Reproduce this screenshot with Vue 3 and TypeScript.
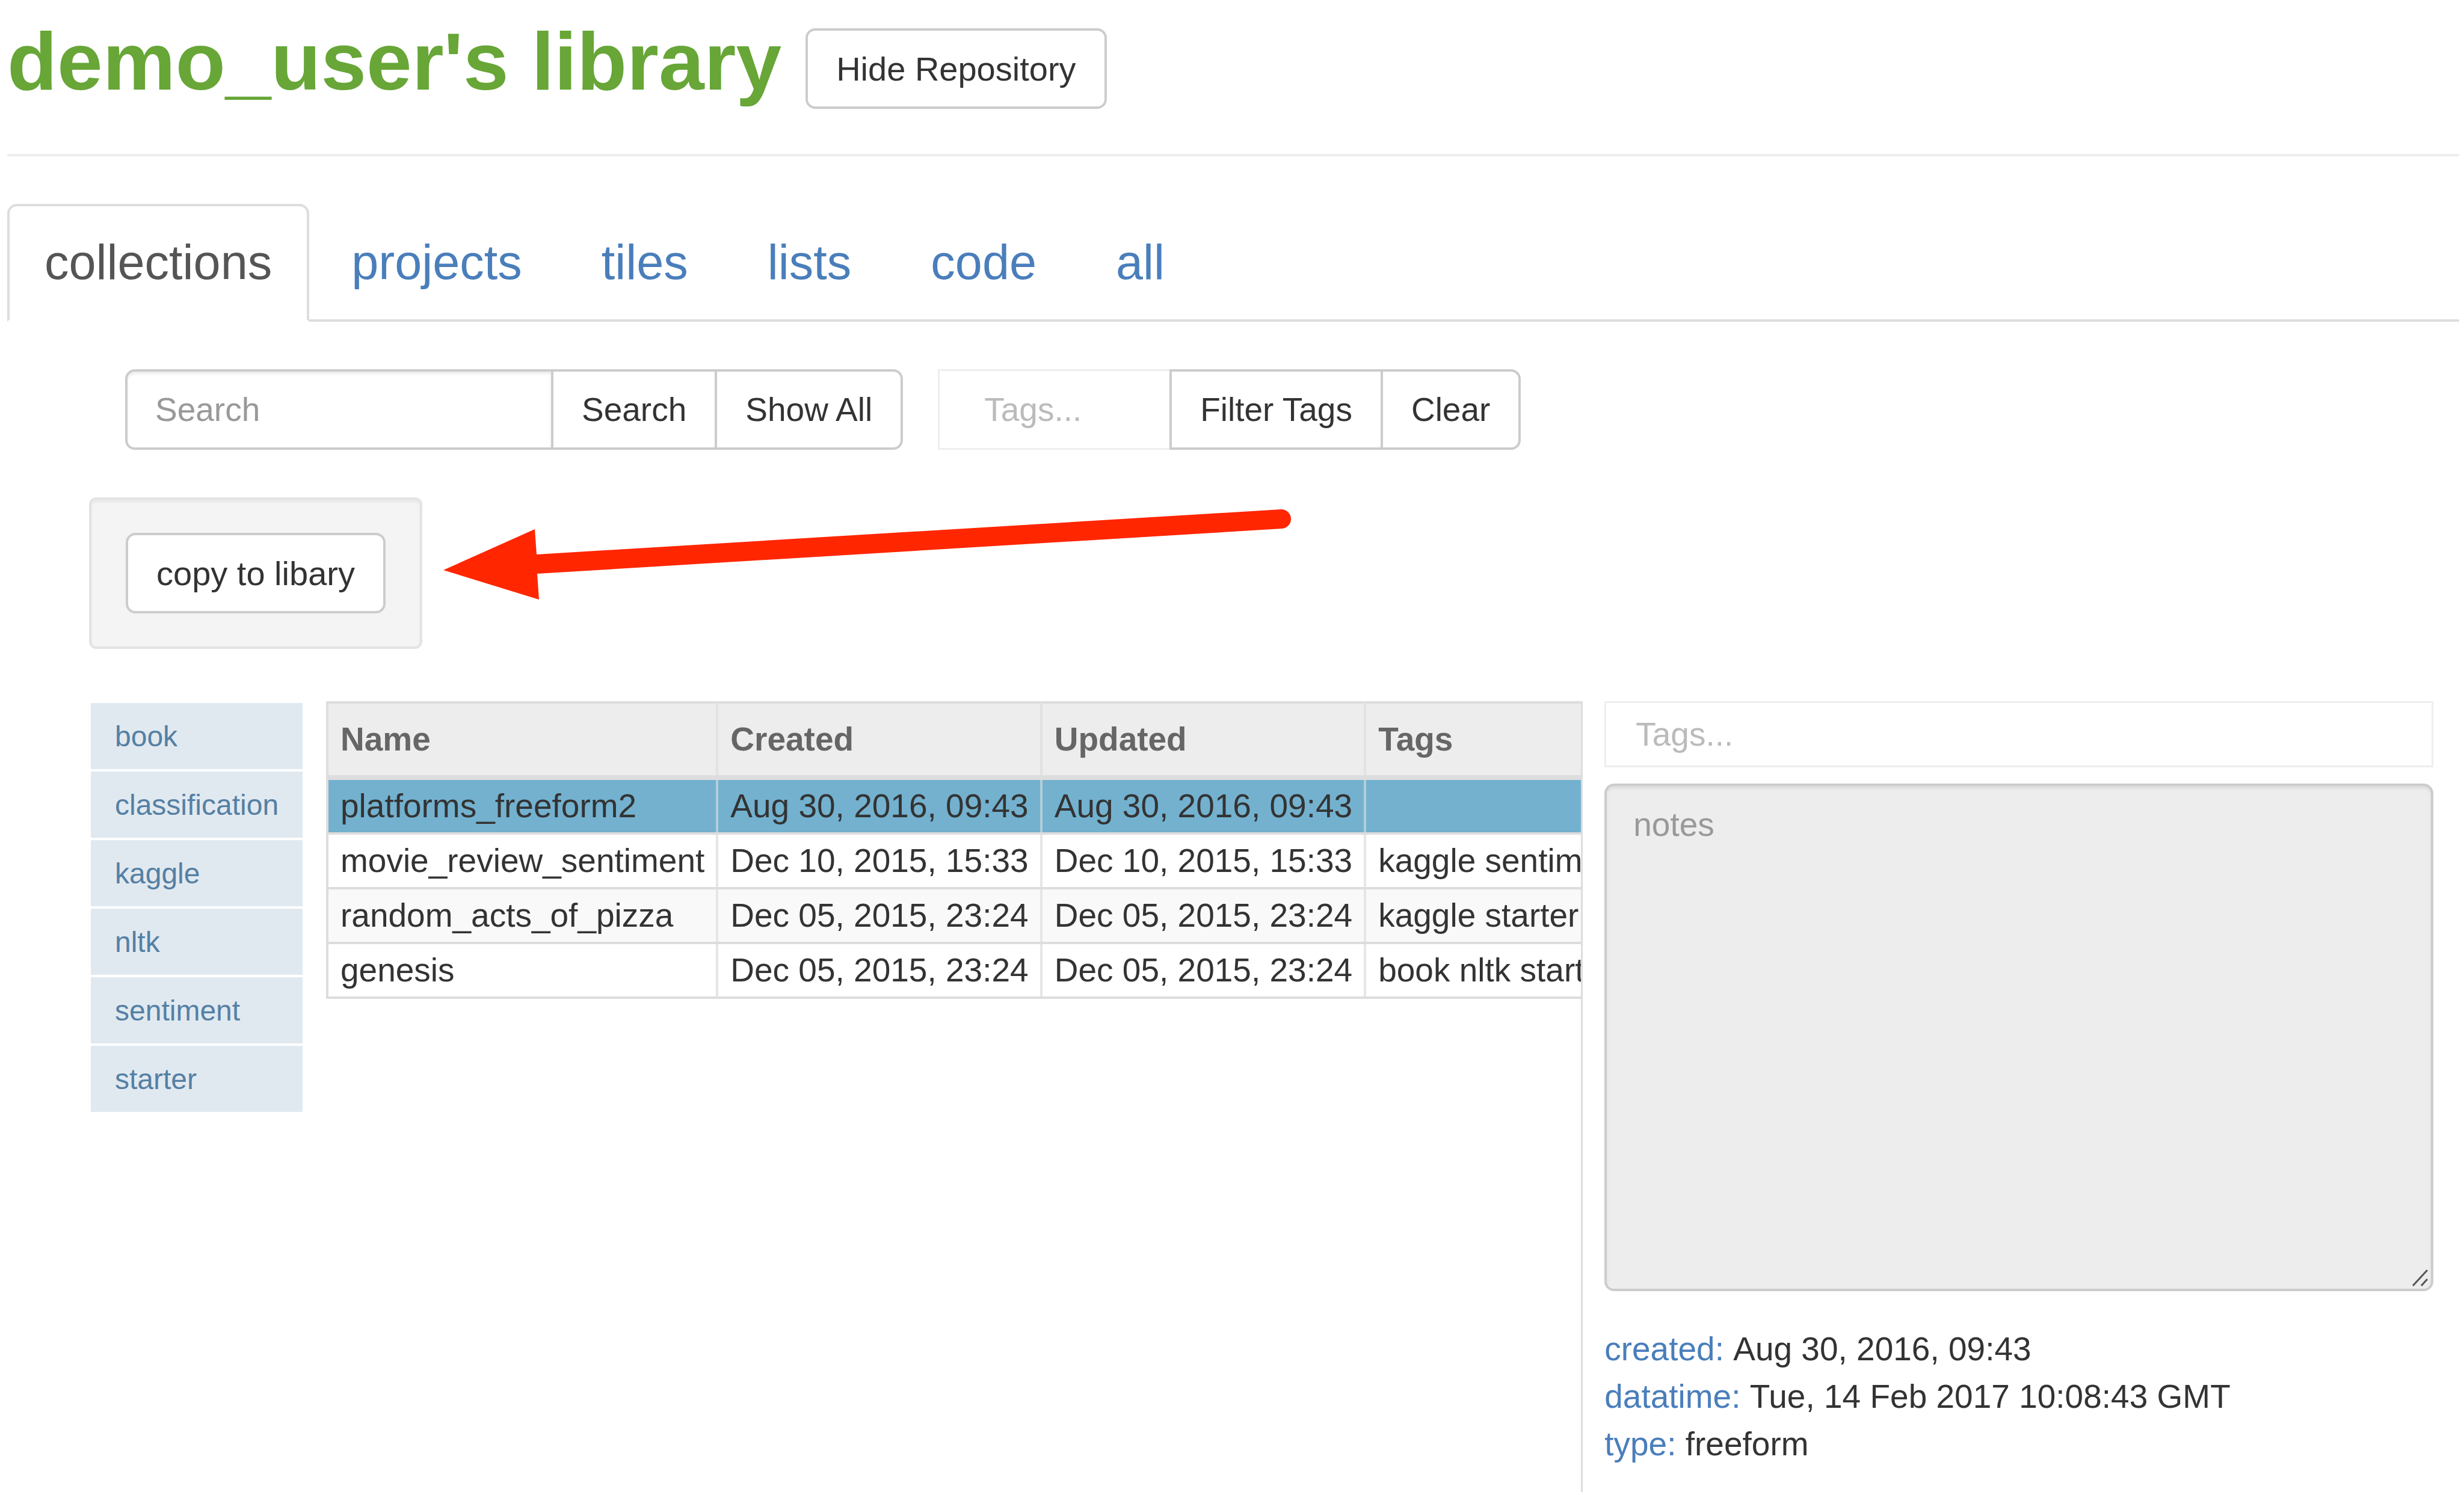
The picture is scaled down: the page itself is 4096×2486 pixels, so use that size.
<script setup lang="ts">
import { ref } from 'vue'

interface Collection {
  name: string
  created: string
  updated: string
  tags: string
}

const tabs: string[] = ['collections', 'projects', 'tiles', 'lists', 'code', 'all']
const activeTab = ref('collections')

const tagNames: string[] = ['book', 'classification', 'kaggle', 'nltk', 'sentiment', 'starter']

const collections: Collection[] = [
  { name: 'platforms_freeform2', created: 'Aug 30, 2016, 09:43', updated: 'Aug 30, 2016, 09:43', tags: '' },
  { name: 'movie_review_sentiment', created: 'Dec 10, 2015, 15:33', updated: 'Dec 10, 2015, 15:33', tags: 'kaggle sentiment' },
  { name: 'random_acts_of_pizza', created: 'Dec 05, 2015, 23:24', updated: 'Dec 05, 2015, 23:24', tags: 'kaggle starter' },
  { name: 'genesis', created: 'Dec 05, 2015, 23:24', updated: 'Dec 05, 2015, 23:24', tags: 'book nltk starter' },
]
const selected = ref('platforms_freeform2')

const details: { label: string; value: string }[] = [
  { label: 'created:', value: 'Aug 30, 2016, 09:43' },
  { label: 'datatime:', value: 'Tue, 14 Feb 2017 10:08:43 GMT' },
  { label: 'type:', value: 'freeform' },
]
</script>

<template>
  <div class="page">
    <header class="page-header">
      <h1>demo_user's library</h1>
      <button type="button" class="btn btn-single">Hide Repository</button>
    </header>

    <nav class="tabs">
      <a
        v-for="tab in tabs"
        :key="tab"
        href="#"
        class="tab"
        :class="{ active: tab === activeTab }"
        @click.prevent="activeTab = tab"
      >{{ tab }}</a>
    </nav>

    <main class="content">
      <form class="toolbar" @submit.prevent>
        <div class="group">
          <input class="field search-field" type="text" placeholder="Search" aria-label="Search" />
          <button type="submit" class="btn">Search</button>
          <button type="button" class="btn last">Show All</button>
        </div>
        <div class="group">
          <input class="tag-field filter-field" type="text" placeholder="Tags..." aria-label="Filter by tags" />
          <button type="button" class="btn">Filter Tags</button>
          <button type="button" class="btn last">Clear</button>
        </div>
      </form>

      <div class="actions">
        <div class="well">
          <button type="button" class="btn btn-single">copy to libary</button>
        </div>
        <svg class="arrow" width="1412" height="152" viewBox="0 0 1412 152" aria-hidden="true">
          <path
            d="M1 102 L153 34 L156 76 L1393 1 A16 16 0 0 1 1395 33 L157 108 L160 151 Z"
            fill="#ff2600"
          />
        </svg>
      </div>

      <div class="panels">
        <ul class="tag-list">
          <li v-for="tag in tagNames" :key="tag">
            <button type="button" class="tag-item">{{ tag }}</button>
          </li>
        </ul>

        <section class="table-panel">
          <table>
            <thead>
              <tr>
                <th>Name</th>
                <th>Created</th>
                <th>Updated</th>
                <th>Tags</th>
              </tr>
            </thead>
            <tbody>
              <tr
                v-for="item in collections"
                :key="item.name"
                :class="{ selected: item.name === selected }"
                @click="selected = item.name"
              >
                <td>{{ item.name }}</td>
                <td>{{ item.created }}</td>
                <td>{{ item.updated }}</td>
                <td>{{ item.tags }}</td>
              </tr>
            </tbody>
          </table>
        </section>

        <aside class="detail">
          <input class="tag-field detail-tags" type="text" placeholder="Tags..." aria-label="Tags" />
          <div class="notes-wrap">
            <textarea class="notes" placeholder="notes" aria-label="notes"></textarea>
            <svg class="grip" width="28" height="30" viewBox="0 0 28 30" aria-hidden="true">
              <path d="M2 28 L26 2 M16 28 L26 17" stroke="#555" stroke-width="3" fill="none" />
            </svg>
          </div>
          <dl>
            <div v-for="row in details" :key="row.label">
              <dt>{{ row.label }}</dt>
              {{ ' ' }}
              <dd>{{ row.value }}</dd>
            </div>
          </dl>
        </aside>
      </div>
    </main>
  </div>
</template>

<style>
body {
  margin: 0;
  background: #fff;
}
</style>

<style scoped>
.page {
  padding: 0 8px 0 12px;
  font-family: "Liberation Sans", Arial, sans-serif;
  font-size: 55px;
  line-height: 79px;
  color: #333;
}

.page *,
.page *::before {
  box-sizing: border-box;
}

.page-header {
  display: flex;
  align-items: flex-start;
  gap: 40px;
  padding: 26px 0 75px;
  border-bottom: 4px solid #eee;
}

h1 {
  margin: 0;
  font-size: 136px;
  line-height: 152px;
  font-weight: bold;
  color: #67a637;
  white-space: nowrap;
}

.btn,
.field,
.tag-field {
  height: 134px;
  margin: 0;
  font-family: inherit;
  font-size: 55px;
  color: #333;
  background: #fff;
  border: 4px solid #ccc;
  border-radius: 0;
  outline: none;
}

.btn {
  padding: 0 47px;
  white-space: nowrap;
  cursor: pointer;
}

.btn-single {
  font-size: 56px;
  border-radius: 16px;
}

.page-header .btn {
  margin-top: 21px;
}

.tabs {
  display: flex;
  gap: 8px;
  margin-top: 79px;
  border-bottom: 4px solid #ddd;
}

.tab {
  margin-bottom: -4px;
  padding: 35px 58px 37px;
  border: 4px solid transparent;
  border-radius: 16px 16px 0 0;
  font-size: 81px;
  line-height: 116px;
  color: #4a7ebb;
  text-decoration: none;
}

.tab.active {
  color: #555;
  background: #fff;
  border-color: #ddd #ddd #fff;
}

.content {
  padding: 79px 43px 0 136px;
}

.toolbar {
  display: flex;
  gap: 58px;
  margin: 0 0 79px 60px;
}

.group {
  display: flex;
}

.group .btn {
  margin-left: -4px;
}

.group .last {
  border-radius: 0 16px 16px 0;
}

.field {
  padding: 0 46px;
  border-radius: 16px 0 0 16px;
  box-shadow: inset 0 4px 4px rgba(0, 0, 0, 0.075);
}

.search-field {
  width: 712px;
}

.field::placeholder,
.notes::placeholder {
  color: #999;
  opacity: 1;
}

.tag-field {
  border: 3px solid #eee;
}

.tag-field::placeholder {
  color: #bbb;
  opacity: 1;
}

.filter-field {
  width: 389px;
  padding: 0 74px;
}

.actions {
  display: flex;
  align-items: flex-start;
  gap: 34px;
}

.well {
  padding: 55px 57px;
  line-height: 0;
  background: #f4f4f4;
  border: 4px solid #e3e3e3;
  border-radius: 12px;
  box-shadow: inset 0 4px 4px rgba(0, 0, 0, 0.05);
}

.arrow {
  margin-top: 19px;
}

.panels {
  display: grid;
  grid-template-columns: 358px minmax(0, 2088fr) minmax(0, 1377fr);
  gap: 36px;
  margin-top: 87px;
}

.tag-list {
  display: flex;
  flex-direction: column;
  gap: 4px;
  margin: 0;
  padding: 3px;
  list-style: none;
}

.tag-list li {
  display: flex;
}

.tag-item {
  flex: 1;
  height: 110px;
  padding: 0 40px;
  border: 0;
  font-family: inherit;
  font-size: 48px;
  text-align: left;
  color: #5480a4;
  background: #e1e9f0;
  cursor: pointer;
}

.table-panel {
  overflow: hidden;
  border-right: 3px solid #ddd;
}

table {
  border-collapse: collapse;
  white-space: nowrap;
}

th,
td {
  padding: 4px 19px 4px 20px;
  text-align: left;
  border: 4px solid #e6e6e6;
  border-top-color: #ddd;
  border-bottom-color: #ddd;
}

th {
  padding-top: 20px;
  padding-bottom: 20px;
  color: #666;
  background: #ededed;
  border-right-color: #e2e2e2;
  border-bottom-width: 8px;
}

th:first-child,
td:first-child {
  border-left-color: #ddd;
}

tbody tr:nth-child(odd) {
  background: #f9f9f9;
}

tbody tr.selected {
  background: #73b1cf;
}

.selected td {
  border-right-color: #b3ced9;
}

.detail {
  padding-bottom: 40px;
}

.detail-tags {
  display: block;
  width: 100%;
  height: 110px;
  padding: 0 49px;
}

.notes-wrap {
  position: relative;
  margin-top: 27px;
}

.notes {
  display: block;
  width: 100%;
  height: 844px;
  padding: 25px 44px;
  font-family: inherit;
  font-size: 55px;
  line-height: 79px;
  color: #333;
  background: #ededed;
  border: 4px solid #ccc;
  border-radius: 16px;
  box-shadow: inset 0 4px 4px rgba(0, 0, 0, 0.075);
  outline: none;
  resize: none;
}

.grip {
  position: absolute;
  right: 8px;
  bottom: 7px;
}

dl {
  margin: 57px 0 0;
}

dt,
dd {
  display: inline;
  margin: 0;
}

dt {
  color: #4a7ebb;
}
</style>
